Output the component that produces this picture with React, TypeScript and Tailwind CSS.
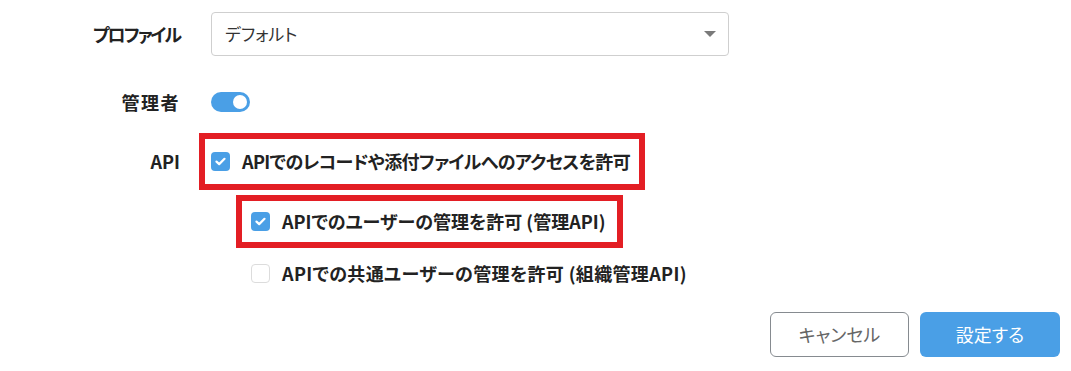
import { useState } from 'react';

const font = "font-['Noto_Sans_CJK_JP','Noto_Sans',sans-serif] [font-feature-settings:'palt']";

function Check({ checked }: { checked: boolean }) {
  if (!checked) {
    return <span className="w-[19px] h-[19px] shrink-0 rounded-[4px] border border-[#dcdcdc] bg-white" />;
  }
  return (
    <span className="w-[19px] h-[19px] shrink-0 rounded-[4px] bg-[#4a9fe6] flex items-center justify-center">
      <svg width="11" height="9" viewBox="0 0 11 9" fill="none">
        <path d="M1.5 4.6 L4.2 7.1 L9.5 1.8" stroke="white" strokeWidth="2.2" strokeLinecap="round" strokeLinejoin="round" />
      </svg>
    </span>
  );
}

export default function App() {
  const [admin, setAdmin] = useState(true);

  return (
    <div className={`w-[1071px] h-[371px] bg-white text-[#222] pt-[12px] ${font}`}>
      <div className="grid grid-cols-[180px_1fr] gap-x-[31px]">
        {/* profile */}
        <div className="h-[44px] flex items-center justify-end text-[18px] font-bold tracking-[-2px]">プロファイル</div>
        <div className="w-[518px] h-[44px] rounded-[4px] border border-[#cfcfcf] flex items-center justify-between pl-[13px] pr-[12px] text-[17px] text-[#333]">
          <span>デフォルト</span>
          <svg width="12" height="6" viewBox="0 0 12 6">
            <path d="M0 0 H12 L6 6 Z" fill="#7a7a7a" />
          </svg>
        </div>

        {/* admin */}
        <div className="mt-[36px] h-[20px] flex items-center justify-end text-[18px] font-bold tracking-[1.5px]">管理者</div>
        <div className="mt-[36px] h-[20px] flex items-center">
          <button
            onClick={() => setAdmin(!admin)}
            className={`w-[39px] h-[20px] rounded-full flex items-center px-[3px] ${admin ? 'bg-[#4a9fe6] justify-end' : 'bg-[#ccc] justify-start'}`}
          >
            <span className="w-[14px] h-[14px] rounded-full bg-white" />
          </button>
        </div>

        {/* api */}
        <div className="mt-[21px] h-[57px] flex items-center justify-end text-[18px] font-bold">API</div>
        <div className="mt-[21px] flex flex-col">
          <div className="-ml-[12px] self-start h-[57px] border-[6px] border-[#e31e24] flex items-center gap-[12px] pl-[6px] pr-[9px] text-[18px] font-bold">
            <Check checked />
            <span className="tracking-[-0.6px]">APIでのレコードや添付ファイルへのアクセスを許可</span>
          </div>
          <div className="ml-[25px] mt-[5px] self-start h-[53px] border-[6px] border-[#e31e24] flex items-center gap-[12px] pl-[9px] pr-[12px] text-[18px] font-bold">
            <Check checked />
            <span>APIでのユーザーの管理を許可 (管理API)</span>
          </div>
          <div className="ml-[40px] mt-[13px] h-[24px] flex items-center gap-[12px] text-[18px] font-bold">
            <Check checked={false} />
            <span className="tracking-[0.35px]">APIでの共通ユーザーの管理を許可 (組織管理API)</span>
          </div>
        </div>
      </div>

      <div className="mt-[27px] pr-[11px] flex justify-end gap-[11px]">
        <button className="w-[139px] h-[45px] rounded-[6px] border border-[#868b90] bg-white text-[18px] text-[#666]">キャンセル</button>
        <button className="w-[140px] h-[45px] rounded-[6px] bg-[#4a9fe6] text-[18px] text-white">設定する</button>
      </div>
    </div>
  );
}
